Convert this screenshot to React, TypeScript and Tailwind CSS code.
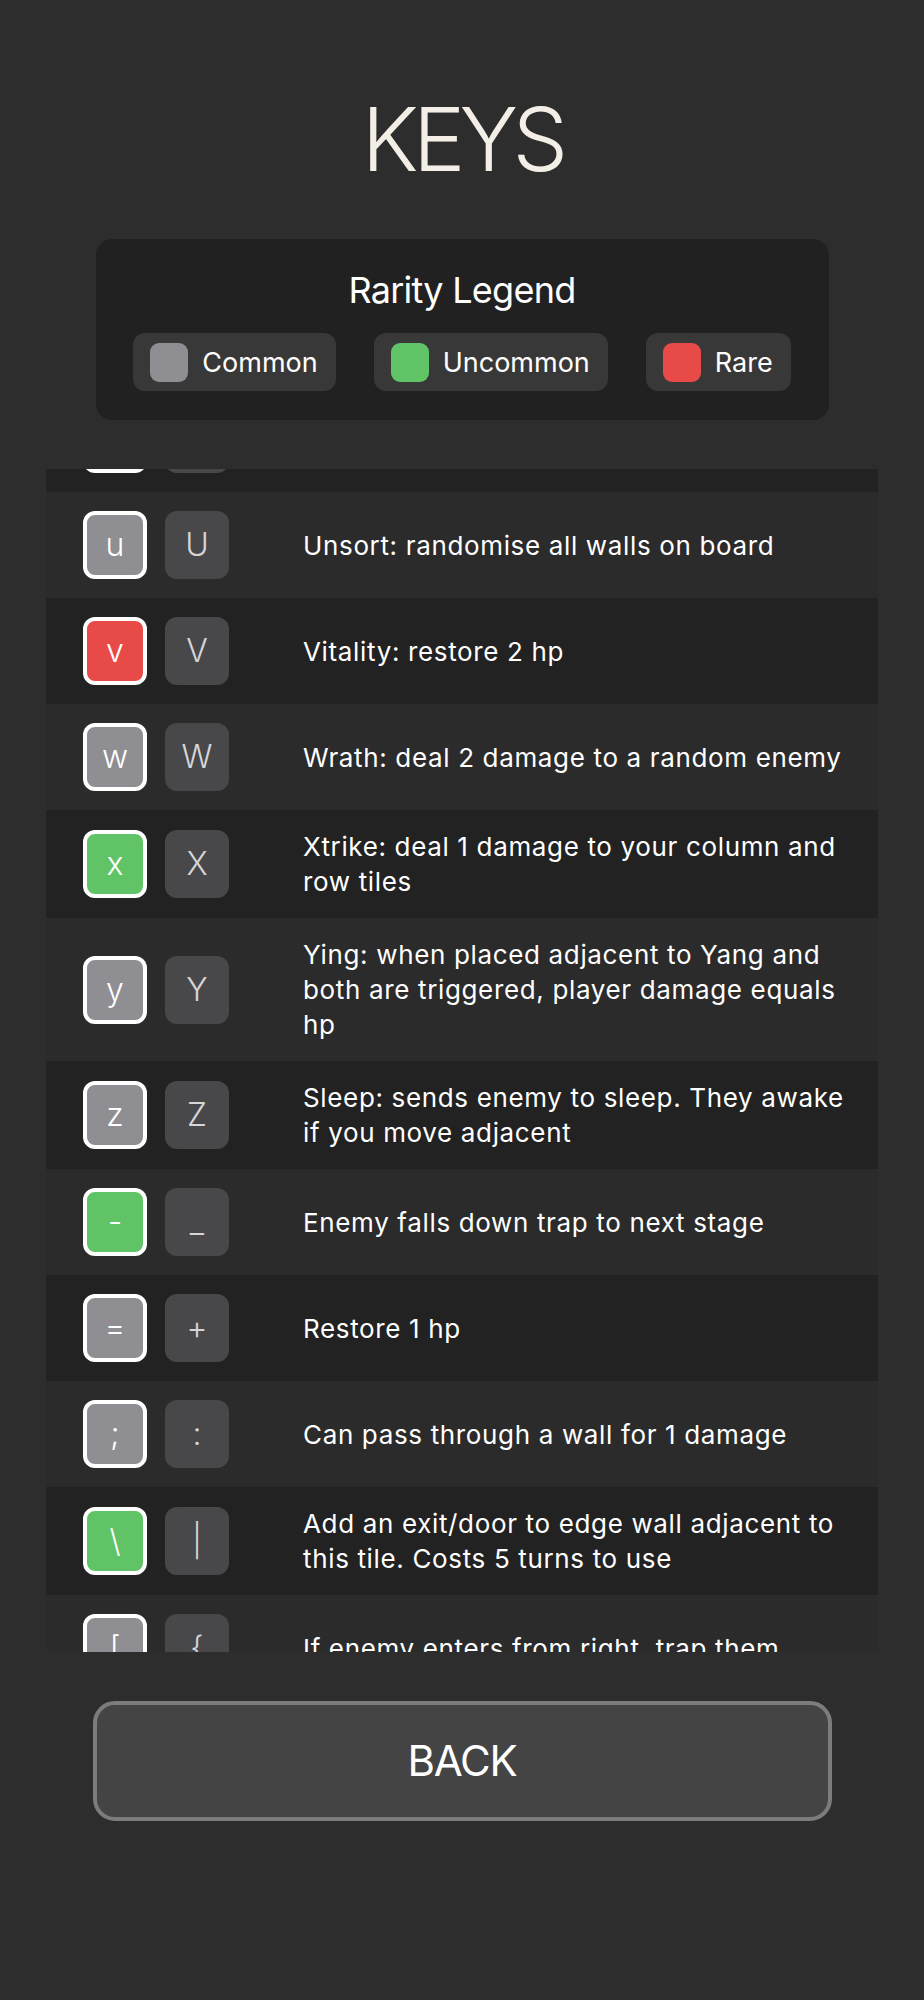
import React from "react";

type Rarity = "common" | "uncommon" | "rare";

const rows: { k: string; s: string; r: Rarity; t: string }[] = [
  { k: "t", s: "T", r: "common", t: "Teleport: move to a random tile" },
  { k: "u", s: "U", r: "common", t: "Unsort: randomise all walls on board" },
  { k: "v", s: "V", r: "rare", t: "Vitality: restore 2 hp" },
  { k: "w", s: "W", r: "common", t: "Wrath: deal 2 damage to a random enemy" },
  { k: "x", s: "X", r: "uncommon", t: "Xtrike: deal 1 damage to your column and row tiles" },
  { k: "y", s: "Y", r: "common", t: "Ying: when placed adjacent to Yang and both are triggered, player damage equals hp" },
  { k: "z", s: "Z", r: "common", t: "Sleep: sends enemy to sleep. They awake if you move adjacent" },
  { k: "-", s: "_", r: "uncommon", t: "Enemy falls down trap to next stage" },
  { k: "=", s: "+", r: "common", t: "Restore 1 hp" },
  { k: ";", s: ":", r: "common", t: "Can pass through a wall for 1 damage" },
  { k: "\\", s: "|", r: "uncommon", t: "Add an exit/door to edge wall adjacent to this tile. Costs 5 turns to use" },
  { k: "[", s: "{", r: "common", t: "If enemy enters from right, trap them" },
];

const rarityBg: Record<Rarity, string> = {
  common: "bg-[#8e8e93]",
  uncommon: "bg-[#60c467]",
  rare: "bg-[#e84a48]",
};

export default function App() {
  return (
    <div
      className="min-h-[2000px] w-full bg-[#2d2d2d] flex flex-col items-center"
      style={{ fontFamily: "Inter, 'Noto Sans', sans-serif" }}
    >
      <h1 className="mt-[95px] text-[88px] leading-none font-light text-[#f4efe6] tracking-[-0.065em]">
        KEYS
      </h1>

      <div className="mt-[56px] w-[733px] h-[181px] rounded-[16px] bg-[#212121] flex flex-col items-center pt-[29px]">
        <div className="text-[36px] leading-[44px] text-white tracking-[-0.02em]">Rarity Legend</div>
        <div className="mt-[21px] flex gap-[38px]">
          {[
            { n: "Common", c: "bg-[#8e8e93]" },
            { n: "Uncommon", c: "bg-[#60c467]" },
            { n: "Rare", c: "bg-[#e84a48]" },
          ].map((x) => (
            <div
              key={x.n}
              className="h-[58px] rounded-[12px] bg-[#383838] flex items-center pl-[17px] pr-[18px] gap-[14px]"
            >
              <div className={`w-[38px] h-[39px] rounded-[9px] ${x.c}`} />
              <span className="text-[27px] text-white leading-none">{x.n}</span>
            </div>
          ))}
        </div>
      </div>

      <div className="mt-[49px] w-[832px] h-[1183px] overflow-hidden">
        <div className="-mt-[83px]">
          {rows.map((row, i) => (
            <div
              key={row.k}
              className={`flex items-center pl-[37px] pr-[24px] py-[19px] ${
                i % 2 === 0 ? "bg-[#222222]" : "bg-[#2b2b2b]"
              }`}
            >
              <div className="flex gap-[18px] shrink-0">
                <div
                  className={`w-[64px] h-[68px] rounded-[12px] border-[4px] border-white flex items-center justify-center ${rarityBg[row.r]}`}
                >
                  <span className="text-[32px] font-light text-white leading-none">{row.k}</span>
                </div>
                <div className="w-[64px] h-[68px] rounded-[12px] bg-[#48484a] flex items-center justify-center">
                  <span className="text-[32px] font-light text-[#d6d6d8] leading-none">{row.s}</span>
                </div>
              </div>
              <div className="ml-[74px] flex-1 text-[26px] leading-[35px] text-white tracking-[0.025em]">
                {row.t}
              </div>
            </div>
          ))}
        </div>
      </div>

      <button className="mt-[49px] w-[739px] h-[120px] rounded-[22px] border-[4px] border-[#7c7c7c] bg-[#444444] text-white text-[42px] leading-none tracking-[-0.03em]">
        BACK
      </button>
    </div>
  );
}
